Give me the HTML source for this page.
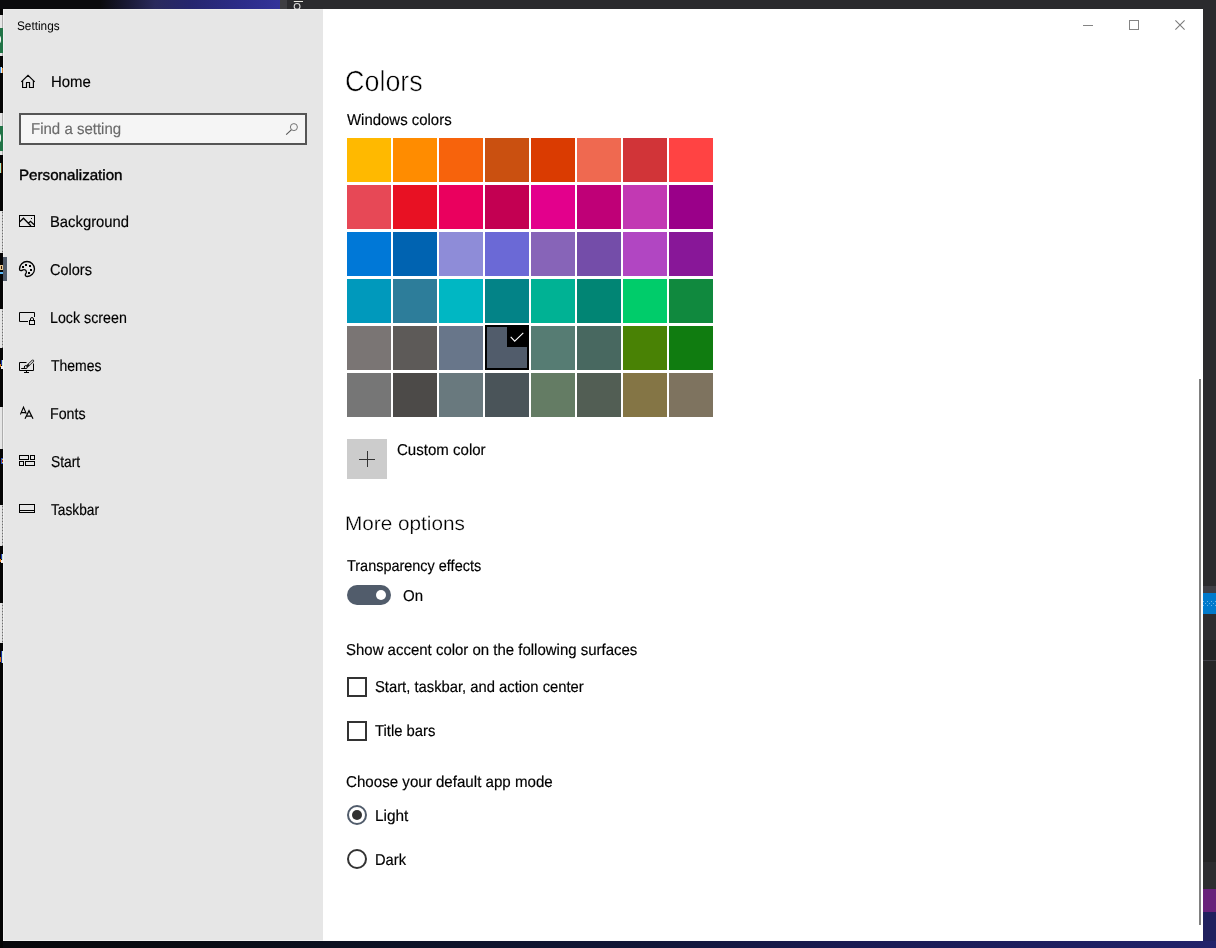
<!DOCTYPE html>
<html>
<head>
<meta charset="utf-8">
<title>Settings</title>
<style>
html,body{margin:0;padding:0;}
body{width:1216px;height:948px;position:relative;overflow:hidden;background:#2b2b2e;font-family:"Liberation Sans",sans-serif;}
.a{position:absolute;}
.t{position:absolute;white-space:nowrap;line-height:1;text-rendering:geometricPrecision;transform-origin:0 0;font-family:"Liberation Sans",sans-serif;}
.sw{position:absolute;width:44px;height:44px;}
svg{position:absolute;overflow:visible;}
</style>
</head>
<body>
<!-- desktop behind the window: top strip -->
<div class="a" style="left:0;top:0;width:118px;height:9px;background:#0b0b0d"></div>
<div class="a" style="left:100px;top:0;width:180px;height:9px;background:linear-gradient(90deg,#0b0b0d 0px,#1b1b38 30px,#2a2a5c 55px,#26266e 90px,#2c2c88 140px,#33339a 180px)"></div>
<div class="a" style="left:280px;top:0;width:7px;height:9px;background:#3e3e42"></div>
<div class="a" style="left:287px;top:0;width:929px;height:9px;background:#2b2b2e"></div>
<svg style="left:290px;top:0" width="16" height="9" viewBox="0 0 16 9">
 <path d="M3.8 1.5H13" stroke="#e8e8e0" stroke-width="1" fill="none"/>
 <circle cx="7.1" cy="6.4" r="2.9" stroke="#d8d8d8" stroke-width="1.1" fill="none"/>
</svg>
<!-- right strip -->
<div class="a" style="left:1203px;top:0;width:13px;height:586px;background:#2b2b2e"></div>
<div class="a" style="left:1203px;top:586px;width:13px;height:7px;background:#3f3f46"></div>
<div class="a" style="left:1203px;top:593px;width:13px;height:21px;background:#007acc"></div>
<div class="a" style="left:1203px;top:601px;width:1px;height:1px;background:#6ab4e6"></div><div class="a" style="left:1207px;top:601px;width:1px;height:1px;background:#6ab4e6"></div><div class="a" style="left:1211px;top:601px;width:1px;height:1px;background:#6ab4e6"></div><div class="a" style="left:1215px;top:601px;width:1px;height:1px;background:#6ab4e6"></div><div class="a" style="left:1205px;top:603px;width:1px;height:1px;background:#6ab4e6"></div><div class="a" style="left:1209px;top:603px;width:1px;height:1px;background:#6ab4e6"></div><div class="a" style="left:1213px;top:603px;width:1px;height:1px;background:#6ab4e6"></div><div class="a" style="left:1203px;top:605px;width:1px;height:1px;background:#6ab4e6"></div><div class="a" style="left:1207px;top:605px;width:1px;height:1px;background:#6ab4e6"></div><div class="a" style="left:1211px;top:605px;width:1px;height:1px;background:#6ab4e6"></div><div class="a" style="left:1215px;top:605px;width:1px;height:1px;background:#6ab4e6"></div>
<div class="a" style="left:1203px;top:614px;width:13px;height:26px;background:#2d2d30"></div>
<div class="a" style="left:1203px;top:640px;width:13px;height:222px;background:#252526"></div>
<div class="a" style="left:1203px;top:660px;width:13px;height:1px;background:#3f3f46"></div>
<div class="a" style="left:1203px;top:862px;width:13px;height:27px;background:#2d2d30"></div>
<div class="a" style="left:1203px;top:889px;width:13px;height:23px;background:#68217a"></div>
<div class="a" style="left:1203px;top:912px;width:13px;height:36px;background:#20205e"></div>
<!-- bottom strip -->
<div class="a" style="left:0;top:941px;width:1216px;height:7px;background:linear-gradient(90deg,#08080b 0px,#0a0c14 200px,#0d1226 400px,#121638 650px,#1a1a52 850px,#22226a 1216px)"></div>
<!-- left strip -->
<div class="a" style="left:0;top:9px;width:3px;height:939px;background:#040404"></div>
<div class="a" style="left:0;top:15px;width:3px;height:41px;background:#e6e6e6"></div>
<div class="a" style="left:2px;top:15px;width:1px;height:41px;background:#adadad"></div>
<div class="a" style="left:0;top:113px;width:3px;height:42px;background:#e6e6e6"></div>
<div class="a" style="left:2px;top:113px;width:1px;height:42px;background:#adadad"></div>
<div class="a" style="left:0;top:211px;width:3px;height:42px;background:#e6e6e6"></div>
<div class="a" style="left:2px;top:211px;width:1px;height:42px;background:repeating-linear-gradient(180deg,#b4b4b4 0,#b4b4b4 1px,#6e6e6e 1px,#6e6e6e 2px,#b4b4b4 2px,#b4b4b4 4px);background-size:1px 3px"></div>
<div class="a" style="left:0;top:309px;width:3px;height:39px;background:#e6e6e6"></div>
<div class="a" style="left:2px;top:309px;width:1px;height:39px;background:repeating-linear-gradient(180deg,#b4b4b4 0,#b4b4b4 2px,#6e6e6e 2px,#6e6e6e 3px,#b4b4b4 3px,#b4b4b4 5px);background-size:1px 3px"></div>
<div class="a" style="left:0;top:407px;width:3px;height:42px;background:#e6e6e6"></div>
<div class="a" style="left:2px;top:407px;width:1px;height:42px;background:#adadad"></div>
<div class="a" style="left:0;top:505px;width:3px;height:41px;background:#e6e6e6"></div>
<div class="a" style="left:2px;top:505px;width:1px;height:41px;background:repeating-linear-gradient(180deg,#b4b4b4 0,#b4b4b4 1px,#6e6e6e 1px,#6e6e6e 2px,#b4b4b4 2px,#b4b4b4 4px);background-size:1px 3px"></div>
<div class="a" style="left:0;top:603px;width:3px;height:40px;background:#e6e6e6"></div>
<div class="a" style="left:2px;top:603px;width:1px;height:40px;background:repeating-linear-gradient(180deg,#b4b4b4 0,#b4b4b4 2px,#6e6e6e 2px,#6e6e6e 3px,#b4b4b4 3px,#b4b4b4 5px);background-size:1px 3px"></div>
<div class="a" style="left:0;top:28px;width:3px;height:25px;background:#217346"></div>
<div class="a" style="left:-5px;top:35px;width:3.5px;height:7px;border:1.5px solid #eef4f0;border-radius:4px"></div>
<div class="a" style="left:0;top:126px;width:3px;height:25px;background:#217346"></div>
<div class="a" style="left:-5px;top:133px;width:3.5px;height:8px;border:1.5px solid #eef4f0;border-radius:4px"></div>
<div class="a" style="left:0px;top:67px;width:1px;height:6px;background:#3f8fe0"></div>
<div class="a" style="left:1px;top:67px;width:1px;height:6px;background:#f4f4e8"></div>
<div class="a" style="left:2px;top:68px;width:1px;height:5px;background:#d08030"></div>
<div class="a" style="left:0px;top:163px;width:1.3px;height:10px;background:#a8f0d0"></div>
<div class="a" style="left:1.3px;top:163px;width:1px;height:10px;background:#6a2c00"></div>
<div class="a" style="left:0px;top:265px;width:2.5px;height:5px;background:#e8c890"></div>
<div class="a" style="left:1px;top:266px;width:1px;height:3px;background:#301000"></div>
<div class="a" style="left:0px;top:272px;width:2.5px;height:1.5px;background:#58b8f8"></div>
<div class="a" style="left:1px;top:360px;width:1px;height:5px;background:#2038b0"></div>
<div class="a" style="left:2px;top:360px;width:1px;height:6px;background:#c8e8d8"></div>
<div class="a" style="left:0px;top:364px;width:1px;height:3px;background:#e07818"></div>
<div class="a" style="left:1px;top:366px;width:1.5px;height:3px;background:#f0f0f0"></div>
<div class="a" style="left:1px;top:458px;width:2px;height:6px;background:#3050c0"></div>
<div class="a" style="left:1.6px;top:459px;width:1.2px;height:4px;background:#e8d050"></div>
<div class="a" style="left:2.2px;top:460px;width:0.8px;height:2px;background:#a02010"></div>
<div class="a" style="left:1px;top:554px;width:1px;height:5px;background:#2038b0"></div>
<div class="a" style="left:2px;top:554px;width:1px;height:6px;background:#c8e8d8"></div>
<div class="a" style="left:0px;top:559px;width:1px;height:2.5px;background:#e07818"></div>
<div class="a" style="left:1px;top:560px;width:1.5px;height:3px;background:#f0f0f0"></div>
<div class="a" style="left:1px;top:651px;width:1px;height:12px;background:#1830a0"></div>
<div class="a" style="left:2px;top:651px;width:1px;height:12px;background:#d0f0e0"></div>
<div class="a" style="left:0px;top:657px;width:1px;height:5px;background:#e07010"></div>

<!-- window -->
<div class="a" style="left:3px;top:9px;width:320px;height:932px;background:#e6e6e6"></div>
<div class="a" style="left:323px;top:9px;width:880px;height:932px;background:#ffffff"></div>
<div class="a" style="left:3px;top:9px;width:1px;height:932px;background:#f1f1f1"></div>
<div class="a" style="left:3px;top:940px;width:320px;height:1px;background:#f3f3f3"></div>
<div class="a" style="left:3px;top:9px;width:320px;height:1px;background:#ececec"></div>

<!-- caption buttons -->
<svg style="left:1080px;top:15px" width="110" height="20" viewBox="0 0 110 20">
 <path d="M3 10.5H13" stroke="#848484" stroke-width="1" fill="none"/>
 <rect x="49.5" y="5.5" width="9" height="9" stroke="#848484" stroke-width="1" fill="none"/>
 <path d="M95.4 5.4L104.6 14.6M104.6 5.4L95.4 14.6" stroke="#7a7a7a" stroke-width="1.05" fill="none"/>
</svg>

<!-- scrollbar thumb -->
<div class="a" style="left:1199px;top:379px;width:2px;height:546px;background:#808080"></div>

<!-- selection indicator -->
<div class="a" style="left:3px;top:257px;width:4px;height:24px;background:#515c6b"></div>

<!-- search box -->
<div class="a" style="left:19px;top:113px;width:284px;height:28px;border:2px solid #555;background:#f5f5f5"></div>
<svg style="left:283px;top:120px" width="18" height="18" viewBox="0 0 18 18">
 <circle cx="10.9" cy="7.1" r="3.5" stroke="#6a6a6a" stroke-width="0.95" fill="none"/>
 <path d="M8.3 9.9L3.2 14.7" stroke="#555" stroke-width="1.1" fill="none"/>
</svg>

<!-- sidebar icons -->
<!-- home -->
<svg style="left:19px;top:73px" width="18" height="18" viewBox="0 0 18 18">
 <path d="M2.3 8.95L9 2.25L15.7 8.95M3.6 7.9V14.5H7.5V9.5H10.5V14.5H14.4V7.9" stroke="#000" stroke-width="1.15" fill="none" stroke-linejoin="miter"/>
</svg>
<!-- background -->
<svg style="left:19px;top:215px" width="16" height="12" viewBox="0 0 16 12">
 <rect x="0.5" y="0.5" width="15" height="11" stroke="#000" stroke-width="1" fill="none"/>
 <path d="M0.5 7L4.5 3.2L12 11M9.3 8.2L11.5 6.3L15.5 10" stroke="#000" stroke-width="1.3" fill="none"/>
 <rect x="12" y="3" width="1" height="1" fill="#000"/>
</svg>
<!-- colors (palette) -->
<svg style="left:19px;top:261px" width="16" height="16" viewBox="0 0 16 16">
 <path d="M8 0.5C12.1 0.5 15.5 3.9 15.5 8C15.5 12.1 12 15.5 8.3 15.5C7 15.5 6.2 14.8 6.3 13.8C6.4 12.8 7.6 12.2 7.4 10.8C7.2 9.3 5.8 8.3 4.5 8.6C3.5 8.8 3 9.8 1.9 9.7C0.9 9.6 0.5 8.8 0.5 8C0.5 3.9 3.9 0.5 8 0.5Z" stroke="#000" stroke-width="1.3" fill="none"/>
 <rect x="3" y="5" width="2" height="2" fill="#000"/>
 <rect x="6" y="3" width="2" height="2" fill="#000"/>
 <rect x="10" y="4" width="2" height="2" fill="#000"/>
 <rect x="11" y="8" width="2" height="2" fill="#000"/>
 <rect x="9" y="11" width="2" height="2" fill="#000"/>
</svg>
<!-- lock screen -->
<svg style="left:19px;top:312px" width="16" height="13" viewBox="0 0 16 13">
 <path d="M9 9.5H0.5V0.5H15.5V5" stroke="#000" stroke-width="1" fill="none"/>
 <rect x="10.5" y="8.5" width="5" height="4" stroke="#000" stroke-width="1" fill="none"/>
 <path d="M11.5 8.5V7A1.5 1.5 0 0 1 14.5 7V8.5" stroke="#000" stroke-width="1" fill="none"/>
</svg>
<!-- themes -->
<svg style="left:19px;top:359px" width="16" height="14" viewBox="0 0 16 14">
 <path d="M7.5 3.5H0.5V11.5H14.5V4.5M7.5 11.5V13.5M5 13.5H10" stroke="#000" stroke-width="1" fill="none"/>
 <path d="M13.8 1.85L8.6 6.9" stroke="#1a1a1a" stroke-width="2.7" stroke-linecap="round" fill="none"/>
 <path d="M13.8 1.85L10.3 5.25" stroke="#e6e6e6" stroke-width="1.05" stroke-linecap="round" fill="none"/>
 <circle cx="6.8" cy="8.1" r="1.5" stroke="#000" stroke-width="1" fill="#e6e6e6"/>
 <path d="M2.2 9.5H6.5" stroke="#000" stroke-width="1" fill="none"/>
</svg>
<!-- fonts -->
<svg style="left:19px;top:406px" width="16" height="14" viewBox="0 0 16 14">
 <path d="M1.4 8.5L4.5 1.2L7.3 7.8M2.4 6.6H6.6" stroke="#000" stroke-width="1.05" fill="none"/>
 <path d="M6 12.8L10 4.7L14 12.8M7.4 10.2H12.6" stroke="#000" stroke-width="1.2" fill="none"/>
</svg>
<!-- start -->
<svg style="left:19px;top:455px" width="16" height="11" viewBox="0 0 16 11">
 <rect x="0.5" y="0.5" width="9" height="4" stroke="#000" stroke-width="1" fill="none"/>
 <rect x="11.5" y="0.5" width="4" height="4" stroke="#000" stroke-width="1" fill="none"/>
 <rect x="0.5" y="6.5" width="4" height="4" stroke="#000" stroke-width="1" fill="none"/>
 <rect x="6.5" y="6.5" width="9" height="4" stroke="#000" stroke-width="1" fill="none"/>
</svg>
<!-- taskbar -->
<svg style="left:19px;top:504px" width="16" height="9" viewBox="0 0 16 9">
 <rect x="0.5" y="0.5" width="15" height="8" stroke="#000" stroke-width="1" fill="none"/>
 <path d="M0.5 6.5H15.5" stroke="#000" stroke-width="1" fill="none"/>
</svg>

<!-- color grid -->
<div class="sw" style="left:347px;top:138px;background:#FFB900"></div>
<div class="sw" style="left:393px;top:138px;background:#FF8C00"></div>
<div class="sw" style="left:439px;top:138px;background:#F7630C"></div>
<div class="sw" style="left:485px;top:138px;background:#CA5010"></div>
<div class="sw" style="left:531px;top:138px;background:#DA3B01"></div>
<div class="sw" style="left:577px;top:138px;background:#EF6950"></div>
<div class="sw" style="left:623px;top:138px;background:#D13438"></div>
<div class="sw" style="left:669px;top:138px;background:#FF4343"></div>
<div class="sw" style="left:347px;top:185px;background:#E74856"></div>
<div class="sw" style="left:393px;top:185px;background:#E81123"></div>
<div class="sw" style="left:439px;top:185px;background:#EA005E"></div>
<div class="sw" style="left:485px;top:185px;background:#C30052"></div>
<div class="sw" style="left:531px;top:185px;background:#E3008C"></div>
<div class="sw" style="left:577px;top:185px;background:#BF0077"></div>
<div class="sw" style="left:623px;top:185px;background:#C239B3"></div>
<div class="sw" style="left:669px;top:185px;background:#9A0089"></div>
<div class="sw" style="left:347px;top:232px;background:#0078D7"></div>
<div class="sw" style="left:393px;top:232px;background:#0063B1"></div>
<div class="sw" style="left:439px;top:232px;background:#8E8CD8"></div>
<div class="sw" style="left:485px;top:232px;background:#6B69D6"></div>
<div class="sw" style="left:531px;top:232px;background:#8764B8"></div>
<div class="sw" style="left:577px;top:232px;background:#744DA9"></div>
<div class="sw" style="left:623px;top:232px;background:#B146C2"></div>
<div class="sw" style="left:669px;top:232px;background:#881798"></div>
<div class="sw" style="left:347px;top:279px;background:#0099BC"></div>
<div class="sw" style="left:393px;top:279px;background:#2D7D9A"></div>
<div class="sw" style="left:439px;top:279px;background:#00B7C3"></div>
<div class="sw" style="left:485px;top:279px;background:#038387"></div>
<div class="sw" style="left:531px;top:279px;background:#00B294"></div>
<div class="sw" style="left:577px;top:279px;background:#018574"></div>
<div class="sw" style="left:623px;top:279px;background:#00CC6A"></div>
<div class="sw" style="left:669px;top:279px;background:#10893E"></div>
<div class="sw" style="left:347px;top:326px;background:#7A7574"></div>
<div class="sw" style="left:393px;top:326px;background:#5D5A58"></div>
<div class="sw" style="left:439px;top:326px;background:#68768A"></div>
<div class="sw" style="left:485px;top:326px;background:#515C6B"></div>
<div class="sw" style="left:531px;top:326px;background:#567C73"></div>
<div class="sw" style="left:577px;top:326px;background:#486860"></div>
<div class="sw" style="left:623px;top:326px;background:#498205"></div>
<div class="sw" style="left:669px;top:326px;background:#107C10"></div>
<div class="sw" style="left:347px;top:373px;background:#767676"></div>
<div class="sw" style="left:393px;top:373px;background:#4C4A48"></div>
<div class="sw" style="left:439px;top:373px;background:#69797E"></div>
<div class="sw" style="left:485px;top:373px;background:#4A5459"></div>
<div class="sw" style="left:531px;top:373px;background:#647C64"></div>
<div class="sw" style="left:577px;top:373px;background:#525E54"></div>
<div class="sw" style="left:623px;top:373px;background:#847545"></div>
<div class="sw" style="left:669px;top:373px;background:#7E735F"></div>
<!-- selected swatch -->
<div class="a" style="left:485px;top:325px;width:40px;height:41px;border:2px solid #000;background:#515c6b"></div>
<div class="a" style="left:507px;top:325px;width:22px;height:22px;background:#000"></div>
<svg style="left:507px;top:325px" width="22" height="22" viewBox="0 0 22 22">
 <path d="M3.7 11.9L7.7 16.2L16.3 7.8" stroke="#fff" stroke-width="1.1" fill="none"/>
</svg>

<!-- custom color -->
<div class="a" style="left:347px;top:439px;width:40px;height:40px;background:#cccccc"></div>
<svg style="left:347px;top:439px" width="40" height="40" viewBox="0 0 40 40">
 <path d="M12 20.5H28M20.5 12V28" stroke="#333" stroke-width="1" fill="none"/>
</svg>

<!-- toggle -->
<div class="a" style="left:347px;top:585px;width:44px;height:20px;border-radius:10px;background:#515c6b"></div>
<div class="a" style="left:376px;top:590px;width:10px;height:10px;border-radius:5px;background:#fff"></div>

<!-- checkboxes -->
<div class="a" style="left:347px;top:677px;width:16px;height:16px;border:2px solid #333"></div>
<div class="a" style="left:347px;top:721px;width:16px;height:16px;border:2px solid #333"></div>

<!-- radios -->
<div class="a" style="left:347px;top:805px;width:16px;height:16px;border:2px solid #515c6b;border-radius:10px"></div>
<div class="a" style="left:352.4px;top:810.4px;width:9.2px;height:9.2px;border-radius:5px;background:#303030"></div>
<div class="a" style="left:347px;top:849px;width:16px;height:16px;border:2px solid #333;border-radius:10px"></div>

<!-- texts -->
<div class="a" style="left:0;top:0;width:1216px;height:948px;will-change:transform">
<span class="t" style="left:16.77px;top:20.00px;font-size:12.4px;color:#000;transform-origin:0 10.00px;transform:scale(0.9513,1.0);">Settings</span>
<span class="t" style="left:51.01px;top:75.00px;font-size:15.75px;color:#000;transform-origin:0 12.00px;transform:scale(0.9480,1.0);-webkit-text-stroke:0.18px #000;">Home</span>
<span class="t" style="left:30.70px;top:122.00px;font-size:15.75px;color:#6a6a6a;transform-origin:0 12.00px;transform:scale(0.9535,1.0);-webkit-text-stroke:0.15px #6a6a6a;">Find a setting</span>
<span class="t" style="left:19.09px;top:169.00px;font-size:14.8px;color:#000;transform-origin:0 11.00px;transform:scale(1.0234,1.0);-webkit-text-stroke:0.4px #000;">Personalization</span>
<span class="t" style="left:49.92px;top:215.00px;font-size:15.75px;color:#000;transform-origin:0 12.00px;transform:scale(0.9399,1.0);-webkit-text-stroke:0.18px #000;">Background</span>
<span class="t" style="left:50.17px;top:263.00px;font-size:15.75px;color:#000;transform-origin:0 12.00px;transform:scale(0.9213,1.0);-webkit-text-stroke:0.18px #000;">Colors</span>
<span class="t" style="left:50.06px;top:311.00px;font-size:15.75px;color:#000;transform-origin:0 12.00px;transform:scale(0.9046,1.0);-webkit-text-stroke:0.18px #000;">Lock screen</span>
<span class="t" style="left:51.42px;top:359.00px;font-size:15.75px;color:#000;transform-origin:0 12.00px;transform:scale(0.8876,1.0);-webkit-text-stroke:0.18px #000;">Themes</span>
<span class="t" style="left:50.06px;top:407.00px;font-size:15.75px;color:#000;transform-origin:0 12.00px;transform:scale(0.9025,1.0);-webkit-text-stroke:0.18px #000;">Fonts</span>
<span class="t" style="left:50.88px;top:455.00px;font-size:15.75px;color:#000;transform-origin:0 12.00px;transform:scale(0.8753,1.0);-webkit-text-stroke:0.18px #000;">Start</span>
<span class="t" style="left:51.43px;top:503.00px;font-size:15.75px;color:#000;transform-origin:0 12.00px;transform:scale(0.8710,1.0);-webkit-text-stroke:0.18px #000;">Taskbar</span>
<span class="t" style="left:344.85px;top:68.00px;font-size:29.0px;color:#000;transform-origin:0 23.00px;transform:scale(0.9281,1.0);-webkit-text-stroke:0.55px #fff;">Colors</span>
<span class="t" style="left:347.23px;top:113.00px;font-size:15.75px;color:#000;transform-origin:0 12.00px;transform:scale(0.9487,1.0);-webkit-text-stroke:0.18px #000;">Windows colors</span>
<span class="t" style="left:396.55px;top:443.00px;font-size:15.75px;color:#000;transform-origin:0 12.00px;transform:scale(0.9551,1.0);-webkit-text-stroke:0.18px #000;">Custom color</span>
<span class="t" style="left:344.64px;top:515.00px;font-size:19.6px;color:#000;transform-origin:0 15.00px;transform:scale(1.0582,1.0);-webkit-text-stroke:0.25px #fff;">More options</span>
<span class="t" style="left:347.11px;top:559.00px;font-size:15.75px;color:#000;transform-origin:0 12.00px;transform:scale(0.9175,1.0);-webkit-text-stroke:0.18px #000;">Transparency effects</span>
<span class="t" style="left:403.02px;top:589.00px;font-size:15.75px;color:#000;transform-origin:0 12.00px;transform:scale(0.9550,1.0);-webkit-text-stroke:0.18px #000;">On</span>
<span class="t" style="left:346.43px;top:643.00px;font-size:15.75px;color:#000;transform-origin:0 12.00px;transform:scale(0.9507,1.0);-webkit-text-stroke:0.18px #000;">Show accent color on the following surfaces</span>
<span class="t" style="left:375.03px;top:680.00px;font-size:15.75px;color:#000;transform-origin:0 12.00px;transform:scale(0.9388,1.0);-webkit-text-stroke:0.18px #000;">Start, taskbar, and action center</span>
<span class="t" style="left:375.10px;top:724.00px;font-size:15.75px;color:#000;transform-origin:0 12.00px;transform:scale(0.9413,1.0);-webkit-text-stroke:0.18px #000;">Title bars</span>
<span class="t" style="left:346.24px;top:775.00px;font-size:15.75px;color:#000;transform-origin:0 12.00px;transform:scale(0.9600,1.0);-webkit-text-stroke:0.18px #000;">Choose your default app mode</span>
<span class="t" style="left:374.77px;top:809.00px;font-size:15.75px;color:#000;transform-origin:0 12.00px;transform:scale(0.9768,1.0);-webkit-text-stroke:0.18px #000;">Light</span>
<span class="t" style="left:374.83px;top:853.00px;font-size:15.75px;color:#000;transform-origin:0 12.00px;transform:scale(0.9321,1.0);-webkit-text-stroke:0.18px #000;">Dark</span>
</div>
</body>
</html>
